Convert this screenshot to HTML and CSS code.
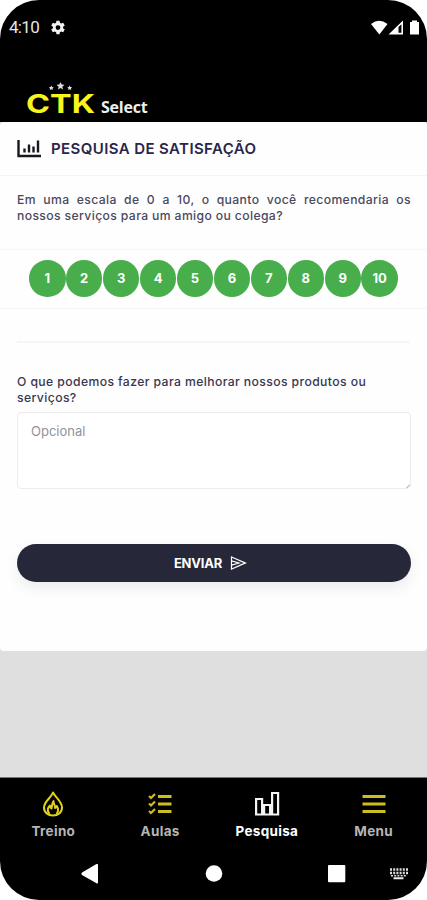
FILE: index.html
```html
<!DOCTYPE html>
<html lang="pt-BR">
<head>
<meta charset="utf-8">
<meta name="viewport" content="width=device-width, initial-scale=1">
<title>Pesquisa de satisfação</title>
<link rel="stylesheet" href="styles.css">
</head>
<body>
<div class="phone">
  <header class="top">
    <div class="status">
      <span class="clock">4:10</span>
      <svg class="gear" width="16" height="16" viewBox="0 0 24 24" fill="#f2f2f2"><path fill-rule="evenodd" d="M9.700 1h4.600l.6 3.200 1.800 1 3.100-1.100 2.300 4-2.500 2.100v2.100l2.500 2.100-2.300 4-3.100-1.100-1.800 1-.6 3.200H9.700l-.6-3.200-1.800-1-3.100 1.100-2.300-4 2.500-2.100v-2.100L1.900 8.100l2.300-4 3.100 1.100 1.800-1zM12 7.700a3.600 3.600 0 1 0 0 7.200 3.600 3.600 0 0 0 0-7.200z"/></svg>
      <svg class="signals" width="50" height="16" viewBox="0 0 50 16" fill="#fff"><path d="M0 4Q8 -2.500 16.500 4L8.400 14.500z"/><path fill-rule="evenodd" d="M17.500 14.500L32 .5v14zM27.500 7v5.800h2.900V4.300z"/><path d="M39 2h2V.5h5V2h2v12.500h-9z"/></svg>
    </div>
    <div class="brand">
      <svg class="logo" width="74" height="40" viewBox="0 0 74 40">
        <g fill="#ddd"><path d="M34.500 1l1.200 2.500 2.800.3-2.100 1.900.6 2.800-2.500-1.400L32 8.500l.6-2.800-2.100-1.900 2.800-.3z"/><path d="M25.300 4.500l.8 1.400 1.600.3-1.100 1.200.2 1.600-1.500-.7-1.500.7.2-1.600-1.100-1.200 1.600-.3zM43.700 4.500l.8 1.400 1.600.3-1.100 1.200.2 1.600-1.500-.7-1.500.7.2-1.600-1.100-1.200 1.600-.3z"/></g>
        <text x="0" y="32" textLength="69" lengthAdjust="spacingAndGlyphs" class="logo-text">CTK</text>
      </svg>
      <span class="brand-name">Select</span>
    </div>
  </header>
  <main class="page">
    <section class="card">
      <div class="title">
        <svg width="25" height="18" viewBox="0 0 25 18" fill="none" stroke="#17171f"><path stroke-width="2.400" d="M1.500 0v16h22.500"/><path stroke-width="2.400" d="M7.500 8.500v4M12 4.500v8M16.500 6.500v6M21 .5v12"/></svg>
        <h1>PESQUISA DE SATISFAÇÃO</h1>
      </div>
      <div class="question"><p class="line first">Em uma escala de 0 a 10, o quanto você recomendaria os</p><p class="line second">nossos serviços para um amigo ou colega?</p></div>
      <div class="scale">
        <button>1</button><button>2</button><button>3</button><button>4</button><button>5</button><button>6</button><button>7</button><button>8</button><button>9</button><button>10</button>
      </div>
      <div class="divider"></div>
      <div class="feedback">
        <label for="op">O que podemos fazer para melhorar nossos produtos ou<br>serviços?</label>
        <div class="field"><textarea id="op" placeholder="Opcional"></textarea><svg class="grip" width="4" height="4" viewBox="0 0 4 4"><path d="M.5 4L4 .5" stroke="#999"/></svg></div>
      </div>
      <button class="send"><span>ENVIAR</span><svg width="17" height="14" viewBox="0 0 17 14" fill="none" stroke="#fff" stroke-width="1.200"><path d="M1.500 1l14 6-14 6zM1.500 4.800L9 7l-7.500 2.200M5 2.500L15 7 5 11.500"/></svg></button>
    </section>
  </main>
  <nav class="tabs">
    <a class="tab"><svg width="22" height="26" viewBox="0 0 22 26" fill="none" stroke="#e0cf1d" stroke-width="2" stroke-linejoin="round"><path d="M11 1.500C13 6 20 10.500 20 16.500 20 21.500 16 24.500 11 24.500S2 21.500 2 16.500C2 10.500 9 7 11 1.500z"/><path d="M7.500 23C4.500 19.500 6 16 8 14.500c0 1.500.5 2.500 1.500 3 .8-3 .5-5.500 2-7.500 0 3.500 2 4 1.500 7 1-.3 1.500-1 1.800-2 2 3 1.200 6-.3 8"/></svg><span>Treino</span></a>
    <a class="tab"><svg width="24" height="26" viewBox="0 0 24 26" fill="none" stroke="#cdbd20" stroke-width="2.200"><path d="M1 5l2 2 4-4M1 12.500l2 2 4-4M1 20l2 2 4-4"/><path stroke-width="2.800" d="M10 5.500h13.500M10 13h13.500M10 20.500h13.500"/></svg><span>Aulas</span></a>
    <a class="tab on"><svg width="26" height="26" viewBox="0 0 26 26" fill="none" stroke="#f4f4f4" stroke-width="2.200"><path d="M2.100 8h6v15.500h-6zM10.100 14h6v9.500h-6zM18.100 2h6v21.500h-6z"/></svg><span>Pesquisa</span></a>
    <a class="tab"><svg width="24" height="26" viewBox="0 0 24 26" stroke="#cdbd20" stroke-width="2.800"><path d="M.5 5.500h23M.5 13h23M.5 20.500h23"/></svg><span>Menu</span></a>
  </nav>
  <div class="system">
    <svg width="427" height="48" viewBox="0 0 427 48" fill="#fff"><path d="M82 22.500L96.500 14Q98 13.500 98 15v17.500q0 1.500-1.500.8L82 25q-1.500-1.200 0-2.500z"/><circle cx="214" cy="23.500" r="8.300"/><rect x="328" y="15" width="17.300" height="17.300" rx="1"/><path d="M390 19.500h18M390 23h18" fill="none" stroke="#ddd" stroke-width="2.400" stroke-dasharray="2 1.200"/><path d="M391 25.800h16" fill="none" stroke="#ddd" stroke-width="1.500" stroke-dasharray="2 1.200"/><path d="M393.500 27.300h10v1.900h-10z" fill="#eee"/></svg>
  </div>
</div>
</body>
</html>
```
FILE: styles.css
```css
* { box-sizing: border-box; }
body { margin: 0; background: #fff; font-family: Inter, Roboto, sans-serif; }
h1, p { margin: 0; }
button, textarea { font-family: inherit; border: 0; }
.phone { width: 427px; height: 900px; border-radius: 39px; overflow: hidden; background: #000; display: flex; flex-direction: column; }
.top { height: 122px; flex: none; display: flex; flex-direction: column; }
.status { display: flex; align-items: center; padding: 18px 6px 0 9px; height: 37px; flex: none; }
.clock { font: 400 17px/19px Roboto, sans-serif; color: #e6e6e6; width: 41px; letter-spacing: -.7px; }
.signals { margin-left: auto; }
.brand { display: flex; align-items: flex-end; padding-left: 26px; margin-top: 44px; height: 40px; flex: none; }
.logo-text { font: 700 25.5px Inter, sans-serif; fill: #f8f51d; }
.brand-name { font: 700 16px/22px "Open Sans", sans-serif; color: #eee; margin: 0 0 3px 1px; letter-spacing: -.2px; }
.page { height: 656px; flex: none; background: #dfdfdf; border-bottom: 1px solid #777; }
.card { height: 529px; background: #fefefe; border-radius: 4px; overflow: hidden; display: flex; flex-direction: column; }
.title { height: 54px; border-bottom: 1px solid #f4f4f6; display: flex; align-items: center; padding: 0 0 0 17px; gap: 9px; }
.title h1 { font-size: 15px; font-weight: 600; line-height: 20px; letter-spacing: .4px; color: #28264a; white-space: nowrap; padding-top: 1px; }
.question { height: 73px; padding: 16px 16px 0 17px; color: #4b4960; font-size: 12.200px; font-weight: 500; line-height: 16px; letter-spacing: .37px; }
.line { white-space: nowrap; }
.first { text-align-last: justify; }
.scale { height: 60px; padding: 0 29px 1px; border-top: 1px solid #f6f6f7; border-bottom: 1px solid #f6f6f7; display: flex; align-items: center; justify-content: space-between; }
.scale button { width: 36.500px; height: 36.500px; flex: none; border-radius: 50%; background: #47ae4b; color: #fff; font-size: 13px; font-weight: 700; padding: 0 0 1px; }
.divider { height: 34px; margin: 0 17px; border-bottom: 2px solid #f6f6f6; }
.feedback { padding: 31px 16px 0 17px; }
.feedback label { display: block; font-size: 12.200px; font-weight: 500; line-height: 16px; letter-spacing: .4px; color: #39374f; white-space: nowrap; }
.field { position: relative; height: 77px; margin-top: 6px; }
textarea { display: block; width: 100%; height: 100%; resize: none; border: 1px solid #ececef; border-radius: 4px; background: #fff; padding: 10px 13px; font-size: 13px; line-height: 16px; }
textarea::placeholder { color: #92929b; opacity: 1; }
.grip { position: absolute; right: 1px; bottom: 1px; }
.send { margin: 55px 16px 0 17px; height: 38px; flex: none; border-radius: 19px; background: #27273a; color: #fff; display: flex; align-items: center; justify-content: center; gap: 8px; padding: 0 7px 1px 0; font-size: 13px; font-weight: 700; letter-spacing: -.2px; box-shadow: 0 6px 14px rgba(40, 60, 50, .09); }
.tabs { height: 71px; flex: none; display: grid; grid-template-columns: repeat(4, 1fr); padding-top: 13px; }
.tab { display: flex; flex-direction: column; align-items: center; gap: 5px; color: #b5b5b5; font-size: 13.500px; font-weight: 700; line-height: 18px; letter-spacing: .3px; }
.tab svg { flex: none; }
.on { color: #fff; }
.system { height: 51px; flex: none; }
.system svg { display: block; margin-top: 1px; }
```
